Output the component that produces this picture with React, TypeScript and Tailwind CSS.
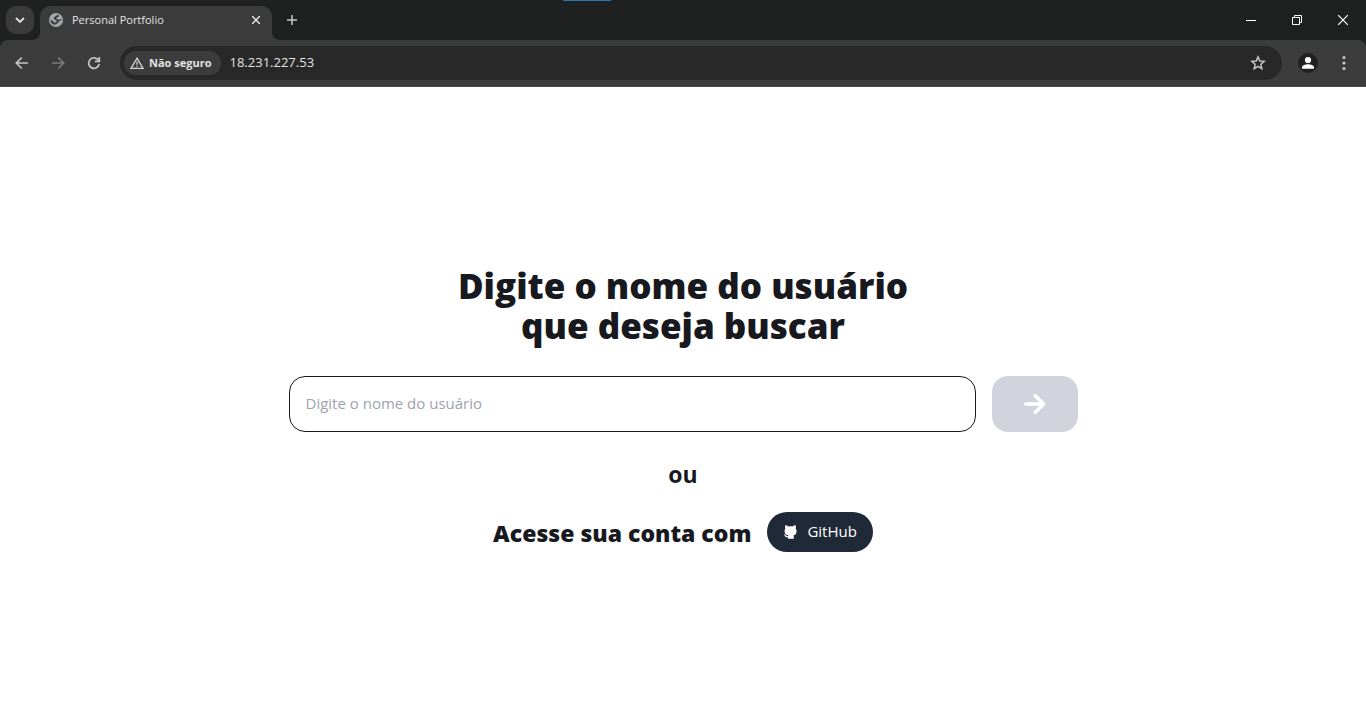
function GlobeIcon() {
  return (
    <svg width="16" height="16" viewBox="0 0 16 16" fill="none" aria-hidden="true">
      <circle cx="8" cy="8" r="7" fill="#a5a9ae" />
      <path d="M10.500 3.200C9.500 5 7 4.600 6.600 6.200c-.2 1.500 3.600.9 3.500 3-.1 1.600-2.500 1.200-3.300 3.300" stroke="#3c3c3c" strokeWidth="1.900" />
      <path d="M2.400 7.400 6.500 10.300 5.900 12.800C4 12.200 2.300 10 2.400 7.400Z" fill="#3c3c3c" />
      <path d="M10 8.600 13.500 7.600" stroke="#3c3c3c" strokeWidth="1.300" />
    </svg>
  );
}

function WarningIcon() {
  return (
    <svg width="14" height="12" viewBox="0 0 14 12" fill="none" stroke="#d5d5d5" strokeWidth="1.3" aria-hidden="true">
      <path d="M7 1.200 13 11.300H1Z" />
      <path d="M7 4.600v3.200M7 8.700v1.300" />
    </svg>
  );
}

function ArrowIcon({ flipped = false }: { flipped?: boolean }) {
  return (
    <svg width="14" height="14" viewBox="0 0 14 14" fill="none" stroke="currentColor" strokeWidth="1.7" aria-hidden="true">
      <path d={flipped ? "M1 7h11.500M7.200 1.500 12.700 7l-5.500 5.500" : "M13 7H1.500M6.800 1.500 1.300 7l5.500 5.500"} />
    </svg>
  );
}

function ReloadIcon() {
  return (
    <svg width="14" height="14" viewBox="0 0 14 14" fill="none" stroke="currentColor" strokeWidth="1.700" aria-hidden="true">
      <path d="M12.200 8A5.300 5.300 0 1 1 11.300 4L12.300 5.200" />
      <path d="M12.300 1v4.400H8" />
    </svg>
  );
}

function StarIcon() {
  return (
    <svg width="16" height="16" viewBox="0 0 16 16" fill="none" stroke="currentColor" strokeWidth="1.500" aria-hidden="true">
      <path d="m8 1.900 1.750 4.050 4.450.4-3.350 2.950 1 4.400L8 11.400l-3.850 2.300 1-4.400L1.800 6.350l4.450-.4Z" />
    </svg>
  );
}

function PersonIcon() {
  return (
    <svg width="20" height="20" viewBox="0 0 20 20" fill="currentColor" aria-hidden="true">
      <circle cx="10" cy="7" r="3.100" />
      <path d="M4 15.800v-1.500C4 12.200 7.500 11.200 10 11.200s6 1 6 3.100v1.500Z" />
    </svg>
  );
}

function CatIcon() {
  return (
    <svg width="16" height="16" viewBox="0 0 16 16" fill="currentColor" aria-hidden="true">
      <path d="M2.300 1.200c1.100 0 2.200.6 3 1.200a9 9 0 0 1 4.200 0c.8-.6 1.900-1.200 3-1.200.5 1.200.5 2.300.2 3.200.7.900 1 2 .8 3.500-.3 2.100-1.400 3.100-3.100 3.500.3.500.4 1.100.4 1.800v1.500H5v-1.500c-2 .4-2.600-.5-3.100-1.300-.3-.6-.6-.8-.9-1-.3-.4.1-.6.5-.5.8.1 1.200.7 1.600 1.200.5.600 1.100.7 2 .4.100-.3.200-.5.400-.7-2.400-.3-3.500-1.300-3.800-3.400-.2-1.500 0-2.600.6-3.500-.3-.9-.4-2 0-3.200Z" />
    </svg>
  );
}

function SubmitArrow() {
  return (
    <svg width="24" height="24" viewBox="0 0 24 24" fill="none" stroke="currentColor" strokeWidth="3.600" strokeLinecap="round" strokeLinejoin="round" aria-hidden="true">
      <path d="M2.800 12H20" />
      <path d="M12.300 3.700 20.700 12l-8.400 8.300" />
    </svg>
  );
}

function TabStrip() {
  return (
    <header className="relative flex h-10 items-stretch bg-[#1f2120] text-[#e3e3e3]">
      <span className="absolute left-[563px] top-0 h-px w-12 bg-[#2477b0]" />
      <button aria-label="Pesquisar guias" className="ml-1.5 mt-1.5 flex size-7 items-center justify-center rounded-[10px] bg-[#3b3b3b]">
        <svg width="10" height="6" viewBox="0 0 10 6" fill="none" stroke="currentColor" strokeWidth="1.800"><path d="m1 1 4 4 4-4" /></svg>
      </button>
      <div className="relative ml-1.5 mt-1.5 flex w-58 items-center rounded-t-[10px] bg-[#3c3c3c] px-2 pb-1.5">
        <svg className="absolute -left-2 bottom-0" width="8" height="8" aria-hidden="true"><path d="M8 0v8H0a8 8 0 0 0 8-8Z" fill="#3c3c3c" /></svg>
        <svg className="absolute -right-2 bottom-0" width="8" height="8" aria-hidden="true"><path d="M0 0v8h8a8 8 0 0 1-8-8Z" fill="#3c3c3c" /></svg>
        <GlobeIcon />
        <span className="ml-2 flex-1 text-[11px]">Personal Portfolio</span>
        <button aria-label="Fechar guia" className="flex size-4 items-center justify-center">
          <svg width="8" height="8" viewBox="0 0 8 8" stroke="currentColor" strokeWidth="1.500"><path d="m0 0 8 8M8 0 0 8" /></svg>
        </button>
      </div>
      <button aria-label="Nova guia" className="ml-3 flex w-4 items-center justify-center text-[#c7c7c7]">
        <svg width="10" height="10" viewBox="0 0 10 10" stroke="currentColor" strokeWidth="1.500"><path d="M5 0v10M0 5h10" /></svg>
      </button>
      <div className="ml-auto flex text-white">
        <button aria-label="Minimizar" className="flex w-[46px] items-center justify-center">
          <svg width="10" height="10" stroke="currentColor"><path d="M0 5.500h10" /></svg>
        </button>
        <button aria-label="Restaurar" className="flex w-[46px] items-center justify-center">
          <svg width="10" height="10" fill="none" stroke="currentColor"><path d="M.5 2.500h7v7h-7ZM2.500 2.500v-2h7v7h-2" /></svg>
        </button>
        <button aria-label="Fechar" className="flex w-[46px] items-center justify-center">
          <svg width="10" height="10" stroke="currentColor" strokeWidth="1.200"><path d="m0 0 10 10M10 0 0 10" /></svg>
        </button>
      </div>
    </header>
  );
}

function Toolbar() {
  return (
    <div className="bg-[#1f2120]">
      <nav className="flex h-[47px] items-center rounded-t-lg border-b border-[#4a4a4a] bg-[#3c3c3c] px-3 text-[#c7c7c7]">
        <button aria-label="Voltar" className="flex size-5 items-center justify-center"><ArrowIcon /></button>
        <button aria-label="Avançar" disabled className="ml-4 flex size-5 items-center justify-center text-[#7b7b7b]"><ArrowIcon flipped /></button>
        <button aria-label="Recarregar" className="ml-4 flex size-5 items-center justify-center"><ReloadIcon /></button>
        <div className="ml-4 flex h-[34px] flex-1 items-center rounded-full bg-[#282828] pl-1 pr-4">
          <button className="flex h-6 items-center gap-[5px] rounded-full bg-[#3c3c3c] pl-1.5 pr-2.5 text-[11px] font-bold text-[#e3e3e3]">
            <WarningIcon />
            Não seguro
          </button>
          <input aria-label="Endereço" defaultValue="18.231.227.53" className="ml-2 min-w-0 flex-1 bg-transparent text-[13px] text-[#e3e3e3] outline-none" />
          <button aria-label="Adicionar aos favoritos"><StarIcon /></button>
        </div>
        <button aria-label="Perfil" className="ml-4 flex size-5 items-center justify-center rounded-full bg-[#1f2120] text-white"><PersonIcon /></button>
        <button aria-label="Menu" className="ml-4 flex size-5 items-center justify-center">
          <svg width="4" height="16" viewBox="0 0 4 16" fill="currentColor"><circle cx="2" cy="2.500" r="1.600" /><circle cx="2" cy="8" r="1.600" /><circle cx="2" cy="13.500" r="1.600" /></svg>
        </button>
      </nav>
    </div>
  );
}

export default function App() {
  return (
    <div className="flex min-h-screen flex-col bg-white font-['Open_Sans','Noto_Sans',sans-serif] text-[#18191f]">
      <TabStrip />
      <Toolbar />
      <main className="flex flex-1 flex-col items-center justify-center px-8 pt-0.5">
        <h1 className="max-w-lg text-center text-[35px] font-extrabold leading-10">
          Digite o nome do usuário
          <br />
          que deseja buscar
        </h1>
        <form className="mt-[30px] flex h-14 w-full max-w-[789px] gap-4" onSubmit={(e) => e.preventDefault()}>
          <input aria-label="Nome do usuário" placeholder="Digite o nome do usuário" className="min-w-0 flex-1 rounded-2xl border border-[#18191f] px-4 text-[15px] outline-none placeholder:text-[#a0a3ae]" />
          <button aria-label="Buscar" className="flex w-[86px] items-center justify-center rounded-2xl bg-[#d1d4dc] text-white"><SubmitArrow /></button>
        </form>
        <p className="mt-[26px] text-[23px] font-bold leading-8">ou</p>
        <div className="mt-[22px] flex items-center gap-4">
          <h2 className="pt-0.5 text-[23px] font-extrabold leading-8">Acesse sua conta com</h2>
          <button className="flex h-10 items-center gap-2 rounded-full bg-[#1f2937] px-4 text-[15px] text-white">
            <CatIcon />
            GitHub
          </button>
        </div>
      </main>
    </div>
  );
}
